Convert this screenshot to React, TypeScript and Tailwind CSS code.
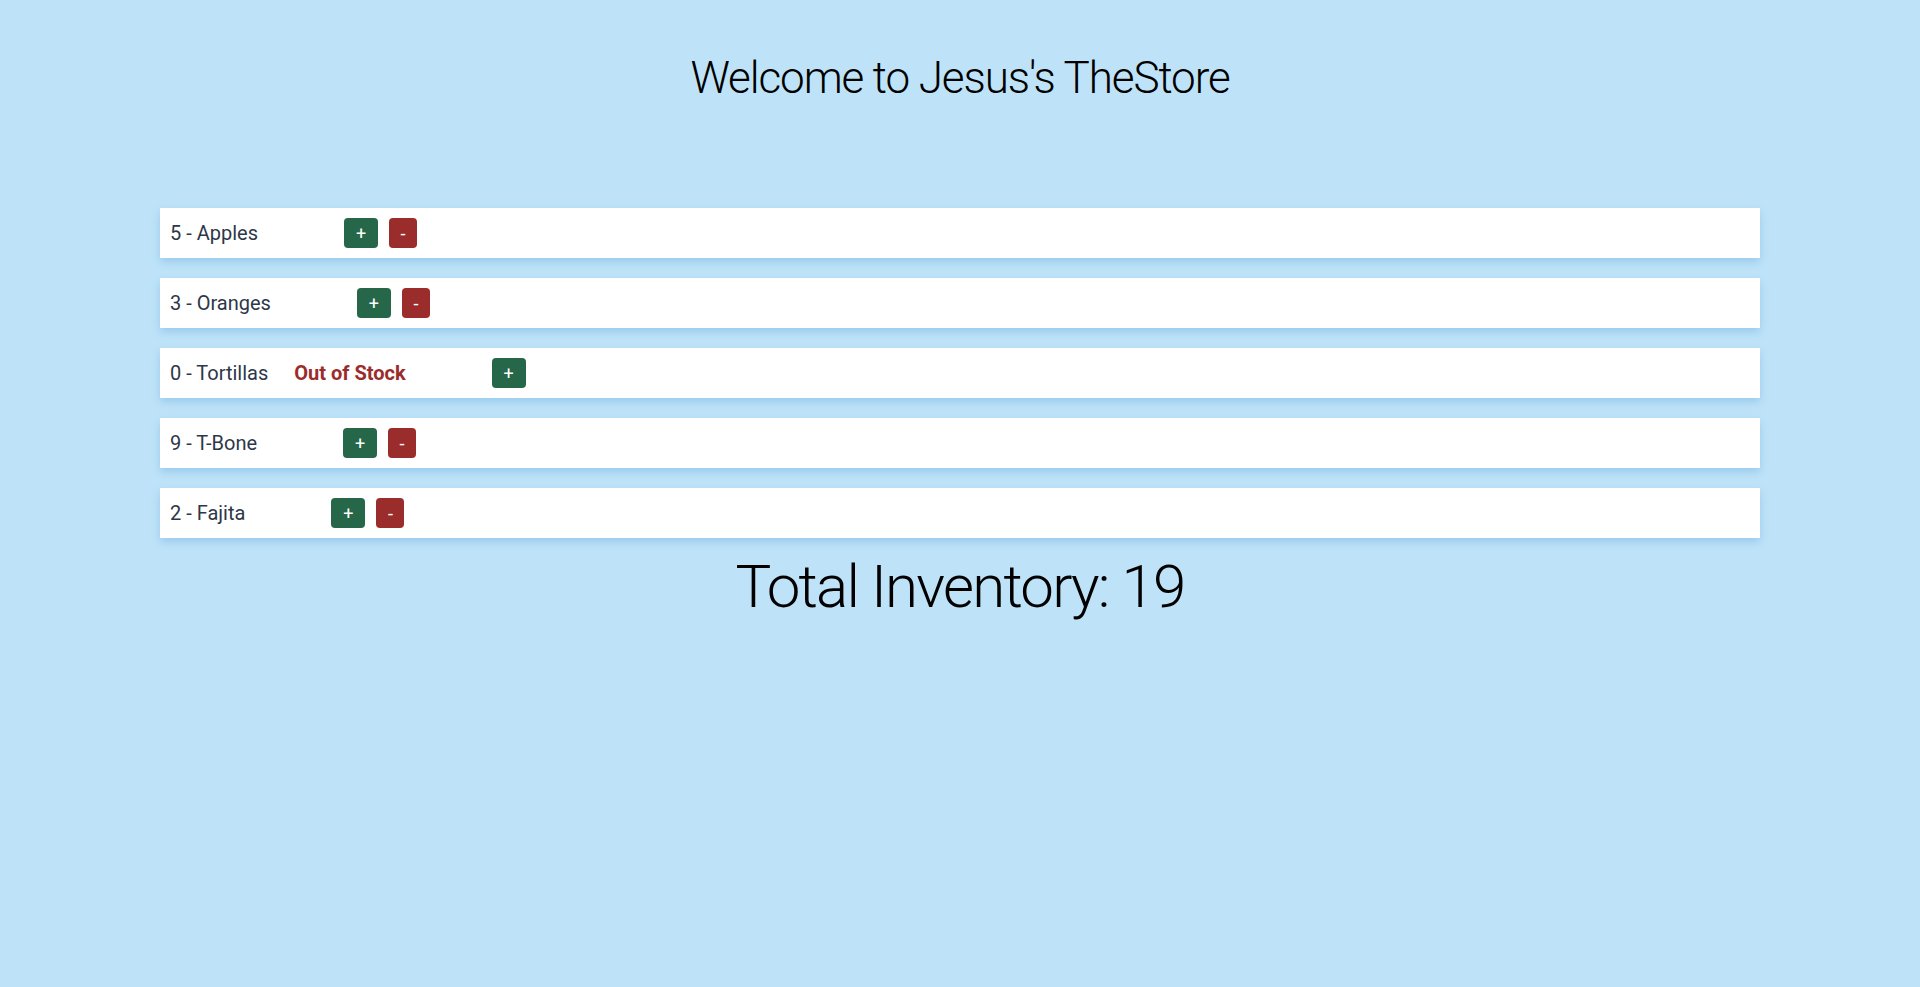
import React from "react";

const items = [
  { name: "Apples", qty: 5 },
  { name: "Oranges", qty: 3 },
  { name: "Tortillas", qty: 0 },
  { name: "T-Bone", qty: 9 },
  { name: "Fajita", qty: 2 },
];

export default function App() {
  const total = items.reduce((s, i) => s + i.qty, 0);
  return (
    <div className="min-h-[987px] w-full bg-[#bee3f8] text-black" style={{ fontFamily: 'Roboto, "Noto Sans", sans-serif' }}>
      <h1 className="pt-[48px] text-center text-[44px] font-light leading-[60px] tracking-[-1.1px] text-black">
        Welcome to Jesus's TheStore
      </h1>
      <div className="mx-[160px] mt-[100px] flex flex-col gap-[20px]">
        {items.map((it) => (
          <div key={it.name} className="flex h-[50px] items-center bg-white pl-[10px] text-[20px] text-[#2d3748] shadow-[0_4px_8px_rgba(49,130,206,0.25)]">
            <span>
              {it.qty} - {it.name}
            </span>
            {it.qty === 0 && (
              <span className="ml-[26px] font-bold text-[#9b2c2c]">Out of Stock</span>
            )}
            <div className="ml-[86px] flex gap-[11px]">
              <button className="flex h-[30px] w-[34px] items-center justify-center rounded-[4px] bg-[#276749] text-[18px] text-white">
                +
              </button>
              {it.qty > 0 && (
                <button className="flex h-[30px] w-[28px] items-center justify-center rounded-[4px] bg-[#9b2c2c] text-[18px] text-white">
                  -
                </button>
              )}
            </div>
          </div>
        ))}
      </div>
      <div className="mt-[9px] text-center text-[60px] font-light leading-[80px] tracking-[-1.8px] text-black">
        Total Inventory: {total}
      </div>
    </div>
  );
}
